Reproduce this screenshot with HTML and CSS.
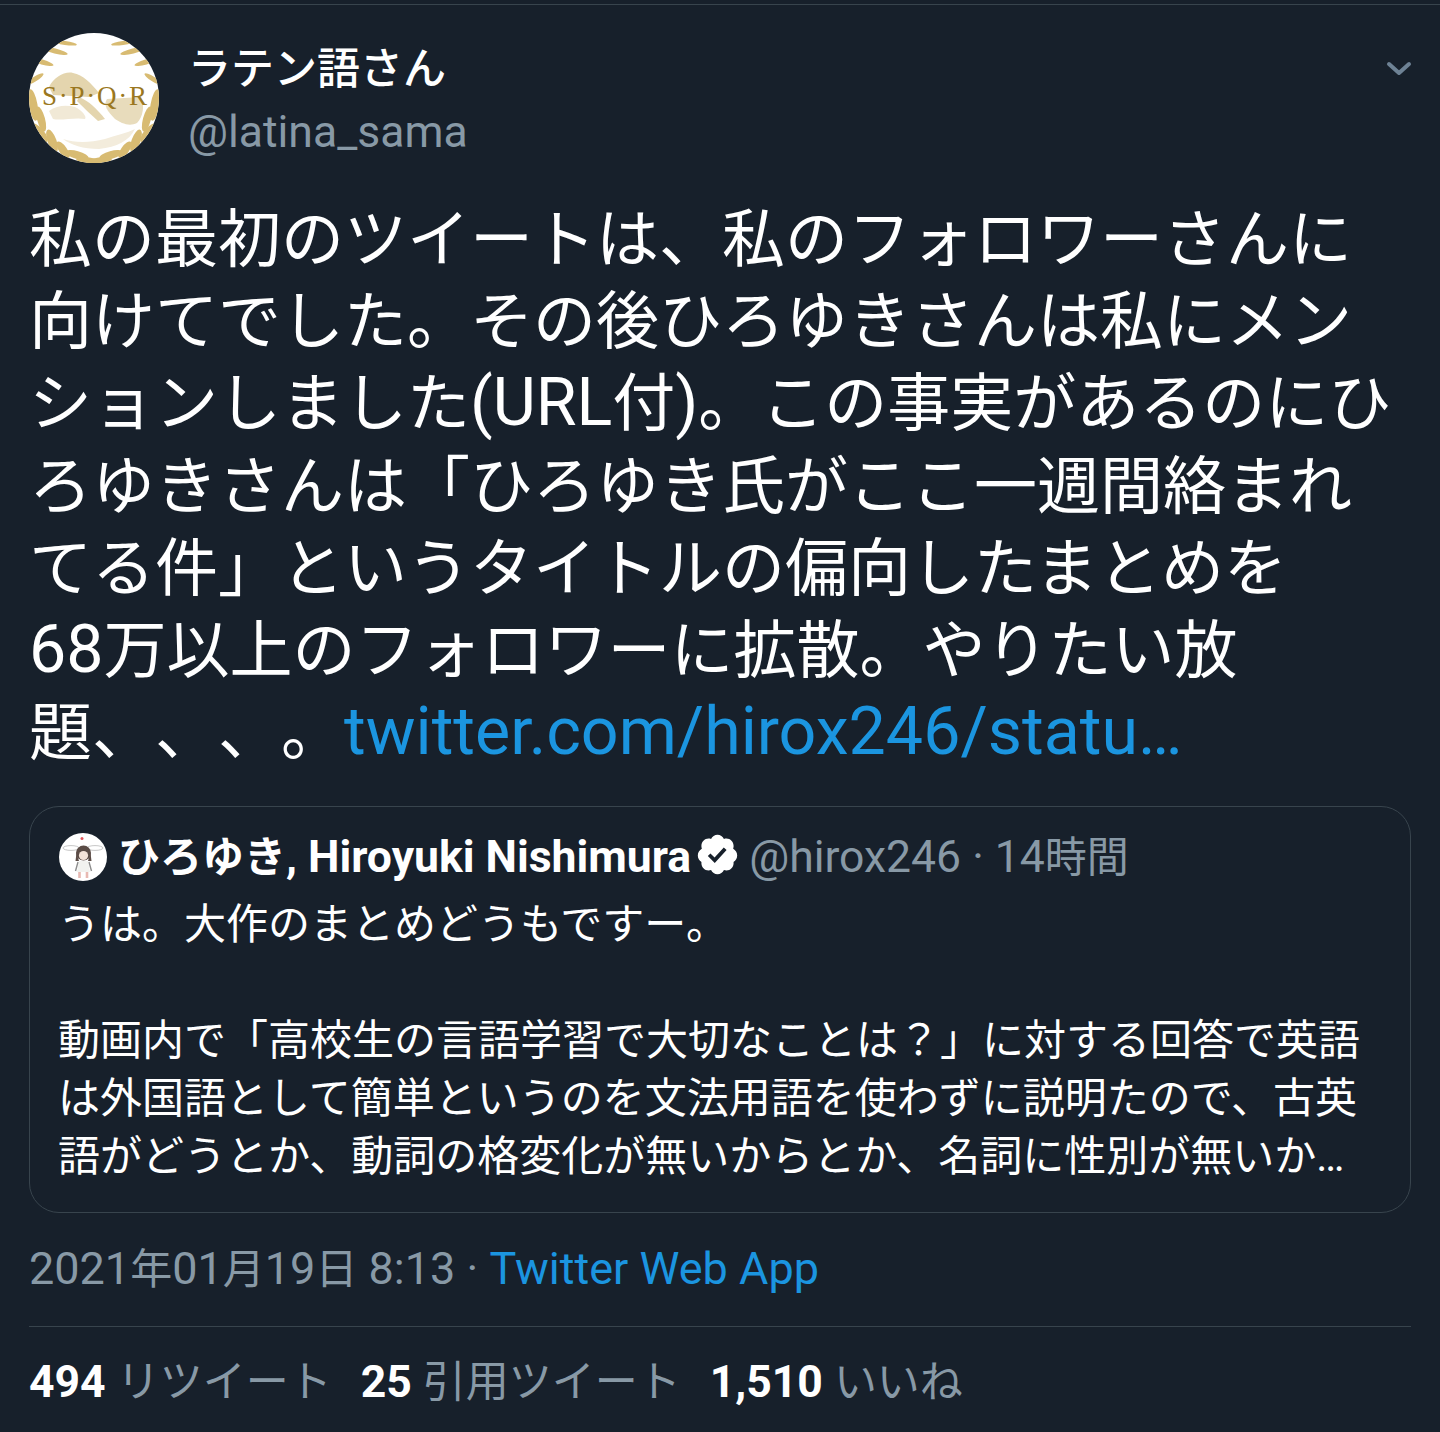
FILE: index.html
```html
<!DOCTYPE html>
<html lang="ja">
<head>
<meta charset="utf-8">
<title>Tweet</title>
<link rel="stylesheet" href="styles.css">
</head>
<body>
<div class="topline"></div>
<main class="tweet">
  <header class="head">
    <svg class="avatar" viewBox="0 0 130 130">
      <defs>
        <clipPath id="c"><circle cx="65" cy="65" r="65"/></clipPath>
        <g id="leaves">
          <ellipse cx="36" cy="10" rx="12" ry="2" transform="rotate(8 36 10)"/>
          <ellipse cx="26" cy="18" rx="13" ry="2.5" transform="rotate(14 26 18)"/>
          <ellipse cx="13" cy="29" rx="12" ry="2.5" transform="rotate(16 13 29)"/>
          <ellipse cx="6" cy="46" rx="10" ry="2.5" transform="rotate(-32 6 46)"/>
          <ellipse cx="4" cy="72" rx="16" ry="4.5" transform="rotate(80 4 72)"/>
          <ellipse cx="12" cy="86" rx="13" ry="4" transform="rotate(75 12 86)"/>
          <ellipse cx="10" cy="100" rx="12" ry="5" transform="rotate(50 10 100)"/>
          <ellipse cx="23" cy="108" rx="12" ry="4.5" transform="rotate(70 23 108)"/>
          <ellipse cx="34" cy="117" rx="10" ry="4" transform="rotate(55 34 117)"/>
          <ellipse cx="48" cy="122" rx="12" ry="4" transform="rotate(15 48 122)"/>
          <ellipse cx="60" cy="128" rx="13" ry="3.5" transform="rotate(8 60 128)"/>
        </g>
      </defs>
      <g clip-path="url(#c)">
        <rect width="130" height="130" fill="#fff"/>
        <path d="M20 54C25 44 36 38 44 40C54 42 62 50 70 60L60 64L24 62Z" fill="#e4d5ae"/>
        <path d="M50 64C60 68 68 76 76 86L69 88C60 80 54 74 48 68Z" fill="#e4d5ae"/>
        <path d="M78 66L112 64C116 72 114 84 108 90C100 94 92 90 86 86C78 78 74 72 78 66Z" fill="#e8dcbc"/>
        <path d="M20 78C28 72 38 72 46 74C54 78 58 84 56 86C46 84 32 88 24 86Z" fill="#f1e9d6"/>
        <path d="M34 106C46 110 60 110 76 106C88 102 98 100 106 96C100 108 88 114 70 116C54 116 42 112 34 106Z" fill="#f3ecdc"/>
        <use href="#leaves" class="gold"/>
        <use href="#leaves" class="gold" transform="translate(130) scale(-1 1)"/>
        <text class="spqr" x="13" y="72" textLength="105" lengthAdjust="spacing">S·P·Q·R</text>
      </g>
    </svg>
    <div class="who">
      <div class="name">ラテン語さん</div>
      <div class="handle">@latina_sama</div>
    </div>
    <svg class="chev" viewBox="0 0 26 16"><path d="M3 3L13 12L23 3" fill="none" stroke="#6e8295" stroke-width="4" stroke-linecap="round" stroke-linejoin="round"/></svg>
  </header>

  <p class="body">私の最初のツイートは、私のフォロワーさんに<br>向けてでした。その後ひろゆきさんは私にメン<br>ションしました<span class="lat">(URL</span>付<span class="lat">)</span>。この事実があるのにひ<br>ろゆきさんは「ひろゆき氏がここ一週間絡まれ<br>てる件」というタイトルの偏向したまとめを<br><span class="lat">68</span>万以上のフォロワーに拡散。やりたい放<br>題、、、。<a class="link lat">twitter.com/hirox246/statu…</a></p>

  <section class="quote">
    <div class="qhead">
      <svg class="qavatar" viewBox="0 0 48 48">
        <circle cx="24" cy="24" r="24" fill="#fff"/>
        <ellipse cx="12" cy="15" rx="8" ry="2.4" fill="#fff" stroke="#b9b9b9" stroke-width=".8"/>
        <ellipse cx="36" cy="15" rx="8" ry="2.4" fill="#fff" stroke="#b9b9b9" stroke-width=".8"/>
        <circle cx="24.5" cy="20" r="7.5" fill="#5b4c46"/>
        <path d="M17.5 20L16.5 28H20ZM31.5 20L32.5 28H29Z" fill="#5b4c46"/>
        <circle cx="24.5" cy="22.5" r="4.6" fill="#f4e3d8"/>
        <path d="M20 28H29L31 39H18Z" fill="#f1f2ef"/>
        <path d="M19 29L16.5 38M30 29L32.5 38" stroke="#8d8d8d" stroke-width="1.4"/>
        <path d="M20.5 39V45M28 39V45" stroke="#e8b9b2" stroke-width="2.6"/>
        <circle cx="23" cy="5.5" r="1.5" fill="#e0555a"/>
      </svg>
      <span class="qname"><span class="ja">ひろゆき</span>, Hiroyuki Nishimura</span>
      <svg class="badge" viewBox="0 0 24 24"><path d="M22.5 12.5c0-1.58-.875-2.95-2.148-3.6.154-.435.238-.905.238-1.4 0-2.21-1.71-3.998-3.818-3.998-.47 0-.92.084-1.336.25C14.818 2.415 13.51 1.5 12 1.5s-2.816.917-3.437 2.25c-.415-.165-.866-.25-1.336-.25-2.11 0-3.818 1.79-3.818 4 0 .494.083.964.237 1.4-1.272.65-2.147 2.018-2.147 3.6 0 1.495.782 2.798 1.942 3.486-.02.17-.032.34-.032.514 0 2.21 1.708 4 3.818 4 .47 0 .92-.086 1.335-.25.62 1.334 1.926 2.25 3.437 2.25 1.512 0 2.818-.916 3.437-2.25.415.163.865.248 1.336.248 2.11 0 3.818-1.79 3.818-4 0-.174-.012-.344-.033-.513 1.158-.687 1.943-1.99 1.943-3.484z" fill="#fff"/><path d="M10.54 16.5l-3.7-3.7 1.4-1.4 2.2 2.2 4.9-5.3 1.5 1.35z" fill="#17202b"/></svg>
      <span class="qmeta">@hirox246 · 14<span class="ja">時間</span></span>
    </div>
    <p class="qbody">うは。大作のまとめどうもですー。<br><br>動画内で「高校生の言語学習で大切なことは？」に対する回答で英語<br>は外国語として簡単というのを文法用語を使わずに説明たので、古英<br>語がどうとか、動詞の格変化が無いからとか、名詞に性別が無いか…</p>
  </section>

  <div class="meta">2021<span class="ja">年</span>01<span class="ja">月</span>19<span class="ja">日</span> 8:13 · <a class="link">Twitter Web App</a></div>

  <div class="stats">
    <span class="stat"><b>494</b> <span class="ja">リツイート</span></span>
    <span class="stat"><b>25</b> <span class="ja">引用ツイート</span></span>
    <span class="stat"><b>1,510</b> <span class="ja">いいね</span></span>
  </div>
</main>
</body>
</html>
```

FILE: styles.css
```css
html, body {
  margin: 0;
  padding: 0;
  height: 1432px;
  overflow: hidden;
  background: #17202b;
  font-family: Roboto, "Noto Sans CJK JP", sans-serif;
  color: #fff;
  text-spacing-trim: space-all;
}
.topline {
  margin-top: 4px;
  height: 1px;
  background: #38444d;
}
.tweet {
  padding: 28px 29px 0 29px;
}
.head {
  display: flex;
  align-items: flex-start;
  height: 130px;
}
.avatar {
  width: 130px;
  height: 130px;
  flex: none;
}
.gold {
  fill: #d8bb72;
}
.spqr {
  font-family: "Liberation Serif", serif;
  font-size: 27px;
  fill: #9a7720;
}
.who {
  margin-left: 29px;
  flex: 1;
}
.name {
  font-size: 43px;
  font-weight: 500;
  line-height: 64px;
  margin-top: 4px;
}
.handle {
  font-size: 44.5px;
  line-height: 63px;
  color: #8899a6;
}
.chev {
  width: 26px;
  height: 16px;
  margin: 28px -1px 0 0;
}
.body {
  margin: 36px 0 0 0;
  font-size: 63px;
  line-height: 82.2px;
  white-space: nowrap;
}
.lat {
  font-size: 66.3px;
  line-height: 1;
}
.link {
  color: #1b95e0;
}
.quote {
  margin: 32px 0 0 0;
  width: 1382px;
  height: 407px;
  box-sizing: border-box;
  border: 1px solid #38444d;
  border-radius: 30px;
  padding: 21px 28px 0 29px;
}
.qhead {
  display: flex;
  align-items: center;
  height: 54px;
}
.qavatar {
  width: 48px;
  height: 48px;
  flex: none;
  margin-top: 4px;
}
.ja {
  font-size: 42px;
}
.qname {
  margin: -4px 0 0 11px;
  font-size: 44.5px;
  font-weight: 700;
  white-space: nowrap;
}
.badge {
  width: 45px;
  height: 45px;
  margin: -2px 0 0 4px;
  flex: none;
}
.qmeta {
  margin: -4px 0 0 9px;
  font-size: 44.5px;
  color: #8899a6;
  white-space: nowrap;
}
.qbody {
  margin: 14px 0 0 -1px;
  font-size: 42px;
  line-height: 58px;
  white-space: nowrap;
}
.meta {
  margin-top: 24px;
  font-size: 45px;
  line-height: 64px;
  color: #8899a6;
}
.stats {
  margin-top: 24px;
  border-top: 1px solid #38444d;
  padding-top: 23px;
  display: flex;
  gap: 29px;
  font-size: 44.5px;
  line-height: 64px;
  color: #8899a6;
}
.stats .ja {
  font-size: 43px;
}
.stat b {
  color: #fff;
  font-weight: 700;
}
```
